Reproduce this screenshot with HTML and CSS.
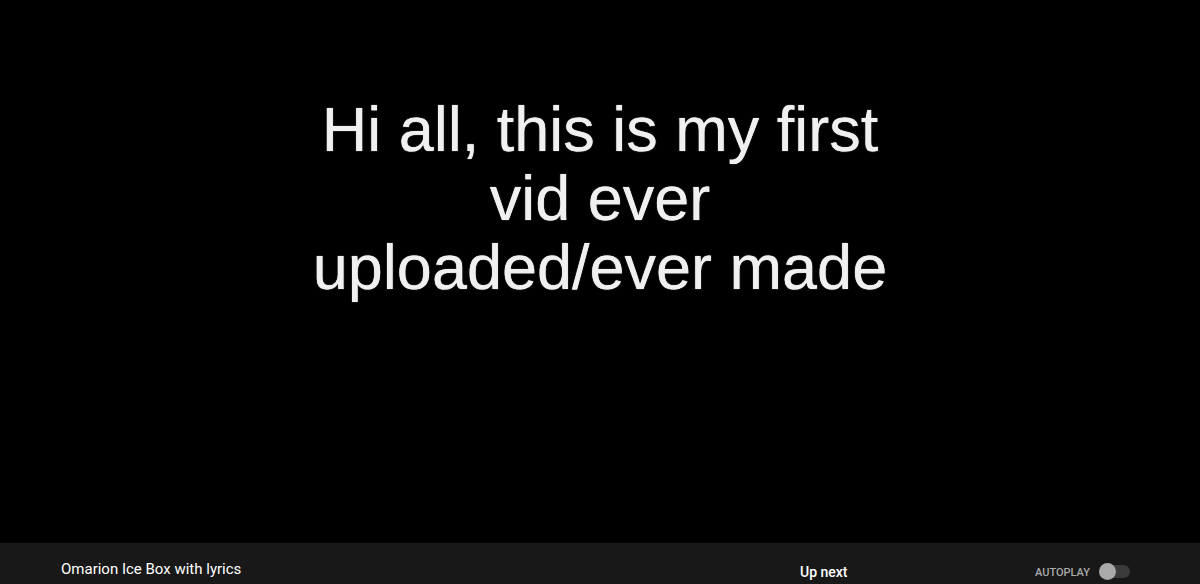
FILE: index.html
```html
<!DOCTYPE html>
<html>
<head>
<meta charset="utf-8">
<link rel="stylesheet" href="styles.css">
</head>
<body>
<div class="video">
  <div class="caption">
    <div class="line">Hi all, this is my first</div>
    <div class="line">vid ever</div>
    <div class="line">uploaded/ever made</div>
  </div>
</div>
<div class="bar">
  <div class="primary">
    <div class="title">Omarion Ice Box with lyrics</div>
  </div>
  <div class="secondary">
    <div class="upnext">Up next</div>
    <div class="autoplay">
      <span class="label">AUTOPLAY</span>
      <span class="toggle"><span class="track"></span><span class="knob"></span></span>
    </div>
  </div>
</div>
</body>
</html>
```
FILE: styles.css
```css
html, body {
  margin: 0;
  padding: 0;
  background: #000;
  width: 1200px;
  height: 584px;
  overflow: hidden;
}
body {
  display: flex;
  flex-direction: column;
  font-family: Roboto, "Liberation Sans", Arial, sans-serif;
}
.video {
  height: 543px;
  flex: none;
  background: #000;
  display: flex;
  justify-content: center;
  padding-top: 95px;
  box-sizing: border-box;
}
.caption {
  font-family: "Liberation Sans", Arial, sans-serif;
  font-size: 63px;
  line-height: 69px;
  color: #f0f0f0;
  text-align: center;
  filter: blur(0.5px);
  text-shadow: 0 0 1px #fff;
  padding-left: 0;
}
.bar {
  flex: 1;
  background: #181818;
  display: flex;
  align-items: flex-start;
}
.primary {
  width: 800px;
  box-sizing: border-box;
  padding-left: 61px;
  padding-top: 16px;
}
.title {
  font-size: 15px;
  line-height: 20px;
  color: #fff;
}
.secondary {
  width: 330px;
  display: flex;
  justify-content: space-between;
  align-items: flex-start;
}
.upnext {
  font-size: 14px;
  font-weight: 500;
  line-height: 20px;
  color: #fff;
  padding-top: 19px;
}
.autoplay {
  display: flex;
  align-items: center;
  gap: 9px;
  padding-top: 20px;
  height: 20px;
}
.label {
  font-size: 11px;
  font-weight: 500;
  line-height: 20px;
  color: #aaa;
}
.toggle {
  position: relative;
  width: 31px;
  height: 17px;
  margin-top: -4px;
}
.track {
  position: absolute;
  left: 1px;
  top: 2px;
  width: 30px;
  height: 13px;
  border-radius: 7px;
  background: #3b3b3b;
}
.knob {
  position: absolute;
  left: 0;
  top: 0;
  width: 17px;
  height: 17px;
  border-radius: 50%;
  background: #aaa;
}
```
